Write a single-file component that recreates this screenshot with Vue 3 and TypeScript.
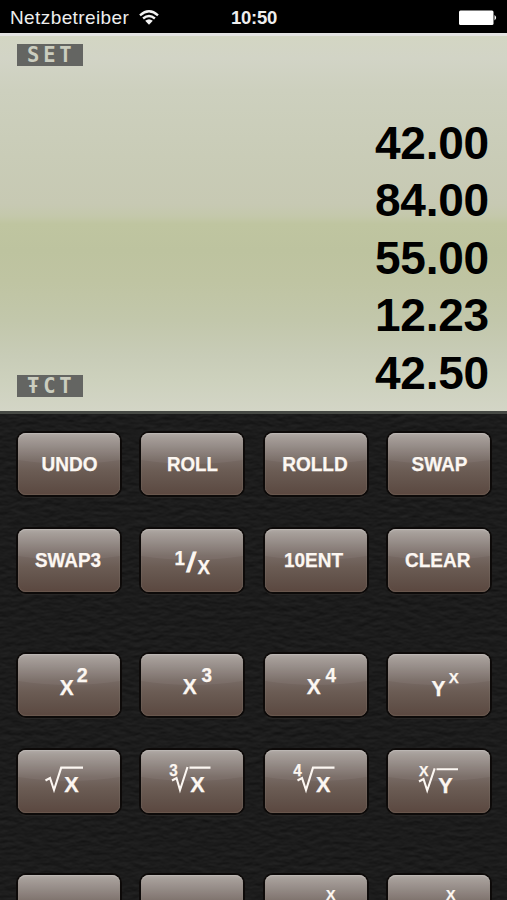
<script setup lang="ts">
interface Part { t: string; x: number; y: number; s: number; w: number; thin?: boolean }
interface Key { id: string; parts: Part[]; radical?: string }

const word = (t: string, x: number, w: number): Key => ({
  id: t,
  parts: [{ t, x, y: 37.7, s: 19.6, w }],
})
const p = (t: string, x: number, y: number, s: number, w: number): Part => ({ t, x, y, s, w })

const groups: Key[][][] = [
  [
    [word('UNDO', 23.5, 56), word('ROLL', 26, 51), word('ROLLD', 17.2, 65.5), word('SWAP', 23.5, 56)],
    [
      word('SWAP3', 17, 66),
      { id: 'inverse', parts: [p('1', 33.5, 36, 19.5, 10.5), { ...p('/', 45.5, 42.5, 27, 9.5), thin: true }, p('X', 56.5, 45.3, 19.5, 12.5)] },
      word('10ENT', 19, 59),
      word('CLEAR', 17, 65.5),
    ],
  ],
  [
    [
      { id: 'square', parts: [p('X', 41.7, 41.3, 22, 14), p('2', 58.8, 28.3, 19.5, 11)] },
      { id: 'cube', parts: [p('X', 41.7, 40, 22, 14), p('3', 60.5, 28.3, 19.5, 10.5)] },
      { id: 'fourth', parts: [p('X', 41.7, 40, 22, 14), p('4', 60.5, 28.3, 19.5, 10.5)] },
      { id: 'power', parts: [p('Y', 43.5, 41.5, 22, 14), p('X', 60.8, 28.7, 15, 10)] },
    ],
    [
      { id: 'root', parts: [p('X', 46.3, 41.5, 22, 14.5)], radical: 'M27.5 30.5L32 28L36 40L43.2 17.6H65' },
      { id: 'root3', parts: [p('3', 28.3, 26, 16, 8.5), p('X', 49.3, 41.5, 22, 14.5)], radical: 'M31 30.5L35.5 28L39 40L46.5 17M48.5 17.6H69.5' },
      { id: 'root4', parts: [p('4', 28.3, 26, 16, 8.5), p('X', 51, 41.5, 22, 14.5)], radical: 'M32.5 30.5L37 28L41 40L48 17.6H69.5' },
      { id: 'rooty', parts: [p('X', 31, 26, 15.5, 9.5), p('Y', 50.3, 42.5, 22, 14.5)], radical: 'M31 31.5L35.5 29L39.2 40.5L46.7 18.4M48.5 19.2H70' },
    ],
  ],
  [
    [
      { id: 'e1', parts: [] },
      { id: 'e2', parts: [] },
      { id: 'e3', parts: [p('X', 61, 24.7, 14.5, 9.5)] },
      { id: 'e4', parts: [p('X', 58, 24.7, 14.5, 9.5)] },
    ],
  ],
]
const stack: string[] = ['42.00', '84.00', '55.00', '12.23', '42.50']
</script>

<template>
  <main class="phone">
    <header class="status">
      <div class="carrier">
        <span>Netzbetreiber</span>
        <svg class="wifi" width="20" height="15" viewBox="0 0 20 15" aria-hidden="true">
          <path d="M1 5.3Q10-2.6 19 5.3M4.1 8.5Q10 3.4 15.9 8.5" />
          <path class="dot" d="M6.2 10.8Q10 7.6 13.8 10.8L10 14.7Z" />
        </svg>
      </div>
      <time>10:50</time>
      <svg class="battery" width="40" height="16" viewBox="0 0 40 16" aria-hidden="true">
        <rect x="1" y="0.5" width="34.5" height="14.5" rx="1.5" />
        <path d="M36.5 5Q39.8 7.7 36.5 10.5Z" />
      </svg>
    </header>

    <section class="lcd">
      <div class="flags">
        <span class="flag">SET</span>
        <span class="flag">ŦCT</span>
      </div>
      <div class="stack">
        <div v-for="v in stack" :key="v" class="value">{{ v }}</div>
      </div>
    </section>

    <section class="pad">
      <svg class="leather" aria-hidden="true">
        <filter id="grain" x="0" y="0" width="100%" height="100%" color-interpolation-filters="sRGB">
          <feTurbulence type="fractalNoise" baseFrequency="0.09 0.2" numOctaves="3" seed="8" />
          <feDiffuseLighting surfaceScale="0.55" lighting-color="#2e2e2e">
            <feDistantLight azimuth="90" elevation="37" />
          </feDiffuseLighting>
        </filter>
        <rect width="100%" height="100%" filter="url(#grain)" />
      </svg>
      <div class="keys">
        <div v-for="(group, g) in groups" :key="g" class="group">
          <div v-for="(row, r) in group" :key="r" class="row">
            <button v-for="key in row" :key="key.id" class="key" type="button">
              <svg class="label" width="102" height="63" viewBox="0 0 102 63">
                <path class="sheen" d="M0 8Q0 0 8 0H94Q102 0 102 8V27Q51 35 0 27Z" />
                <path v-if="key.radical" class="radical" :d="key.radical" />
                <text
                  v-for="part in key.parts"
                  :key="part.t"
                  :class="{ thin: part.thin }"
                  :x="part.x"
                  :y="part.y"
                  :font-size="part.s"
                  :textLength="part.w"
                  lengthAdjust="spacingAndGlyphs"
                >{{ part.t }}</text>
              </svg>
            </button>
          </div>
        </div>
      </div>
    </section>
  </main>
</template>

<style>
body { margin: 0; background: #1b1b1b; }
</style>

<style scoped>
.phone {
  width: 507px;
  height: 900px;
  overflow: hidden;
  display: flex;
  flex-direction: column;
  font-family: "Liberation Sans", Arial, sans-serif;
}
.status {
  flex: none;
  box-sizing: border-box;
  height: 33px;
  padding: 2px 9px 0 10px;
  display: grid;
  grid-template-columns: 1fr auto 1fr;
  align-items: center;
  background: #000;
  color: #eee;
  font-size: 19px;
}
.carrier { display: flex; align-items: center; gap: 10px; letter-spacing: 0.4px; }
.wifi { fill: none; stroke: #f4f4f4; stroke-width: 2.4; }
.wifi .dot { fill: #f4f4f4; stroke: none; }
time { font-weight: bold; font-size: 18.5px; letter-spacing: -0.3px; }
.battery { justify-self: end; fill: #fff; }
.lcd {
  flex: none;
  box-sizing: border-box;
  height: 381px;
  display: flex;
  justify-content: space-between;
  border-top: 3px solid #e3e3e1;
  border-bottom: 3px solid #464944;
  background: linear-gradient(#d3d6c3 0, #d2d4c6 22px, #cdd0be 55px, #c9ccb7 120px, #c7c9b3 168px, #c4c8ab 180px, #bfc5a0 188px, #bdc39f 215px, #bfc4a2 245px, #c2c7ab 285px, #c8ccb7 320px, #cdd1bd 345px, #d3d5c6 375px);
}
.flags {
  display: flex;
  flex-direction: column;
  justify-content: space-between;
  padding: 8px 0 14px 17px;
}
.flag {
  width: 66px;
  height: 22px;
  box-sizing: border-box;
  padding-left: 10px;
  background: #646562;
  color: #cbcdbf;
  font: bold 20.5px/22px "DejaVu Sans Mono", monospace;
  letter-spacing: 3.8px;
  white-space: nowrap;
}
.stack { padding: 78.5px 18px 0 0; text-align: right; }
.value {
  height: 57.6px;
  line-height: 57.6px;
  font-size: 46px;
  letter-spacing: -0.2px;
  font-weight: bold;
  color: #000;
}
.pad { flex: 1; min-height: 0; display: grid; overflow: hidden; background: #1b1b1b; }
.leather { grid-area: 1 / 1; width: 100%; height: 486px; }
.keys {
  grid-area: 1 / 1;
  z-index: 1;
  display: flex;
  flex-direction: column;
  gap: 62px;
  padding: 18.5px 17px 0 18px;
}
.group { display: flex; flex-direction: column; gap: 34px; }
.row { display: flex; justify-content: space-between; }
.key {
  width: 102px;
  height: 62.5px;
  padding: 0;
  border: 0;
  border-radius: 8px;
  background: linear-gradient(#aea7a3 0, #a29a95 4px, #8f8580 14px, #766963 27px, #6b5c54 38px, #62524a 50px, #5b4840 62px);
  box-shadow: 0 0 0 2px #0d0a09, 0 3px 1px #292726, inset 0 1px 1px #b9b4b0, inset 0 -1px 1px #6a584e;
}
.label { display: block; font-family: "Liberation Sans", Arial, sans-serif; font-weight: bold; }
.label text { fill: #fcf7f2; stroke: #fcf7f2; stroke-width: 0.25; }
.label text.thin { font-weight: normal; stroke-width: 0.9; }
.sheen { fill: #fff; fill-opacity: 0.05; }
.radical { fill: none; stroke: #fcf7f2; stroke-width: 2.1; }
</style>
